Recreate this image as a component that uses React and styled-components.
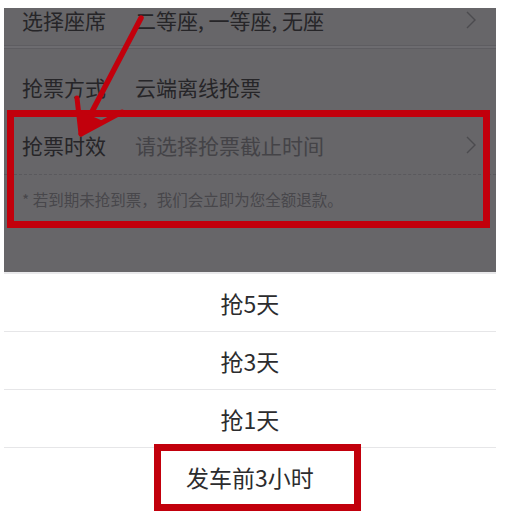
import React from 'react';
import styled, { createGlobalStyle } from 'styled-components';

const GlobalStyle = createGlobalStyle`
  html, body {
    margin: 0;
    padding: 0;
    background: #ffffff;
  }
  body {
    font-family: "Noto Sans CJK SC", "Noto Sans", "Liberation Sans", sans-serif;
  }
`;

const red = '#c2000c';

const Page = styled.div`
  position: relative;
  width: 508px;
  height: 520px;
  padding: 8px 12px 0 4px;
  box-sizing: border-box;
  overflow: hidden;
  background: #fff;
`;

const Dimmed = styled.div`
  height: 264px;
  background: #676669;
  overflow: hidden;
`;

const Row = styled.div`
  display: flex;
  align-items: center;
  box-sizing: border-box;
  height: ${p => p.$height}px;
  padding: ${p => p.$padTop || 0}px 20px ${p => p.$padBottom || 0}px 18px;
  border-bottom: ${p => (p.$dashed ? '1px dashed #5a595d' : 'none')};
  font-size: 21px;
  line-height: 24px;
  color: #262528;
`;

const Label = styled.span`
  width: 113px;
  flex-shrink: 0;
`;

const Value = styled.span`
  flex: 1;
  color: ${p => (p.$placeholder ? '#444347' : '#262528')};
`;

const Chevron = () => (
  <svg width="10" height="18" viewBox="0 0 10 18">
    <polyline points="1,1 9,9 1,17" fill="none" stroke="#4c4b4f" strokeWidth="1.4" />
  </svg>
);

const Band = styled.div`
  height: 2px;
  border-top: 1px solid #5e5d61;
  border-bottom: 1px solid #5e5d61;
  background: #6d6c70;
`;

const Highlight = styled.div`
  position: relative;
  &::after {
    content: '';
    position: absolute;
    top: -6px;
    left: 3px;
    right: 6px;
    bottom: -4px;
    border: 7px solid ${red};
    pointer-events: none;
  }
`;

const Note = styled.div`
  padding: 13px 18px 0;
  height: 49px;
  box-sizing: border-box;
  font-size: 15.5px;
  color: #48474b;
`;

const Sheet = styled.div`
  background: #fff;
  border-top: 2px solid #e9e9eb;
`;

const Option = styled.div`
  position: relative;
  height: 58px;
  box-sizing: border-box;
  border-bottom: 1px solid #e6e6e8;
  display: flex;
  align-items: center;
  justify-content: center;
  font-size: 23px;
  color: #2c2c2e;
  &:last-child {
    border-bottom: none;
  }
  ${p =>
    p.$marked &&
    `
    &::after {
      content: '';
      position: absolute;
      top: -4px;
      left: 150px;
      width: 207px;
      height: 67px;
      box-sizing: border-box;
      border: 7px solid ${red};
    }
  `}
`;

const ArrowLayer = styled.svg`
  position: absolute;
  top: 0;
  left: 0;
  pointer-events: none;
`;

const Arrow = () => (
  <ArrowLayer width="508" height="520" viewBox="0 0 508 520">
    <line x1="141" y1="18" x2="84" y2="127" stroke={red} strokeWidth="5.5" strokeLinecap="round" />
    <line x1="77" y1="98" x2="81" y2="134" stroke={red} strokeWidth="5" strokeLinecap="round" />
    <line x1="122" y1="112" x2="81" y2="134" stroke={red} strokeWidth="5" strokeLinecap="round" />
    <polygon points="81,136 78,110 103,121" fill={red} />
  </ArrowLayer>
);

const options = ['抢5天', '抢3天', '抢1天', '发车前3小时'];

export default function App() {
  return (
    <>
      <GlobalStyle />
      <Page>
        <Dimmed>
          <Row $height={37} $padBottom={13}>
            <Label>选择座席</Label>
            <Value>二等座, 一等座, 无座</Value>
            <Chevron />
          </Row>
          <Band />
          <Row $height={67} $padTop={9}>
            <Label>抢票方式</Label>
            <Value>云端离线抢票</Value>
          </Row>
          <Highlight>
            <Row $height={59} $dashed>
              <Label>抢票时效</Label>
              <Value $placeholder>请选择抢票截止时间</Value>
              <Chevron />
            </Row>
            <Note>* 若到期未抢到票，我们会立即为您全额退款。</Note>
          </Highlight>
        </Dimmed>
        <Sheet>
          {options.map((o, i) => (
            <Option key={o} $marked={i === options.length - 1}>
              {o}
            </Option>
          ))}
        </Sheet>
        <Arrow />
      </Page>
    </>
  );
}
